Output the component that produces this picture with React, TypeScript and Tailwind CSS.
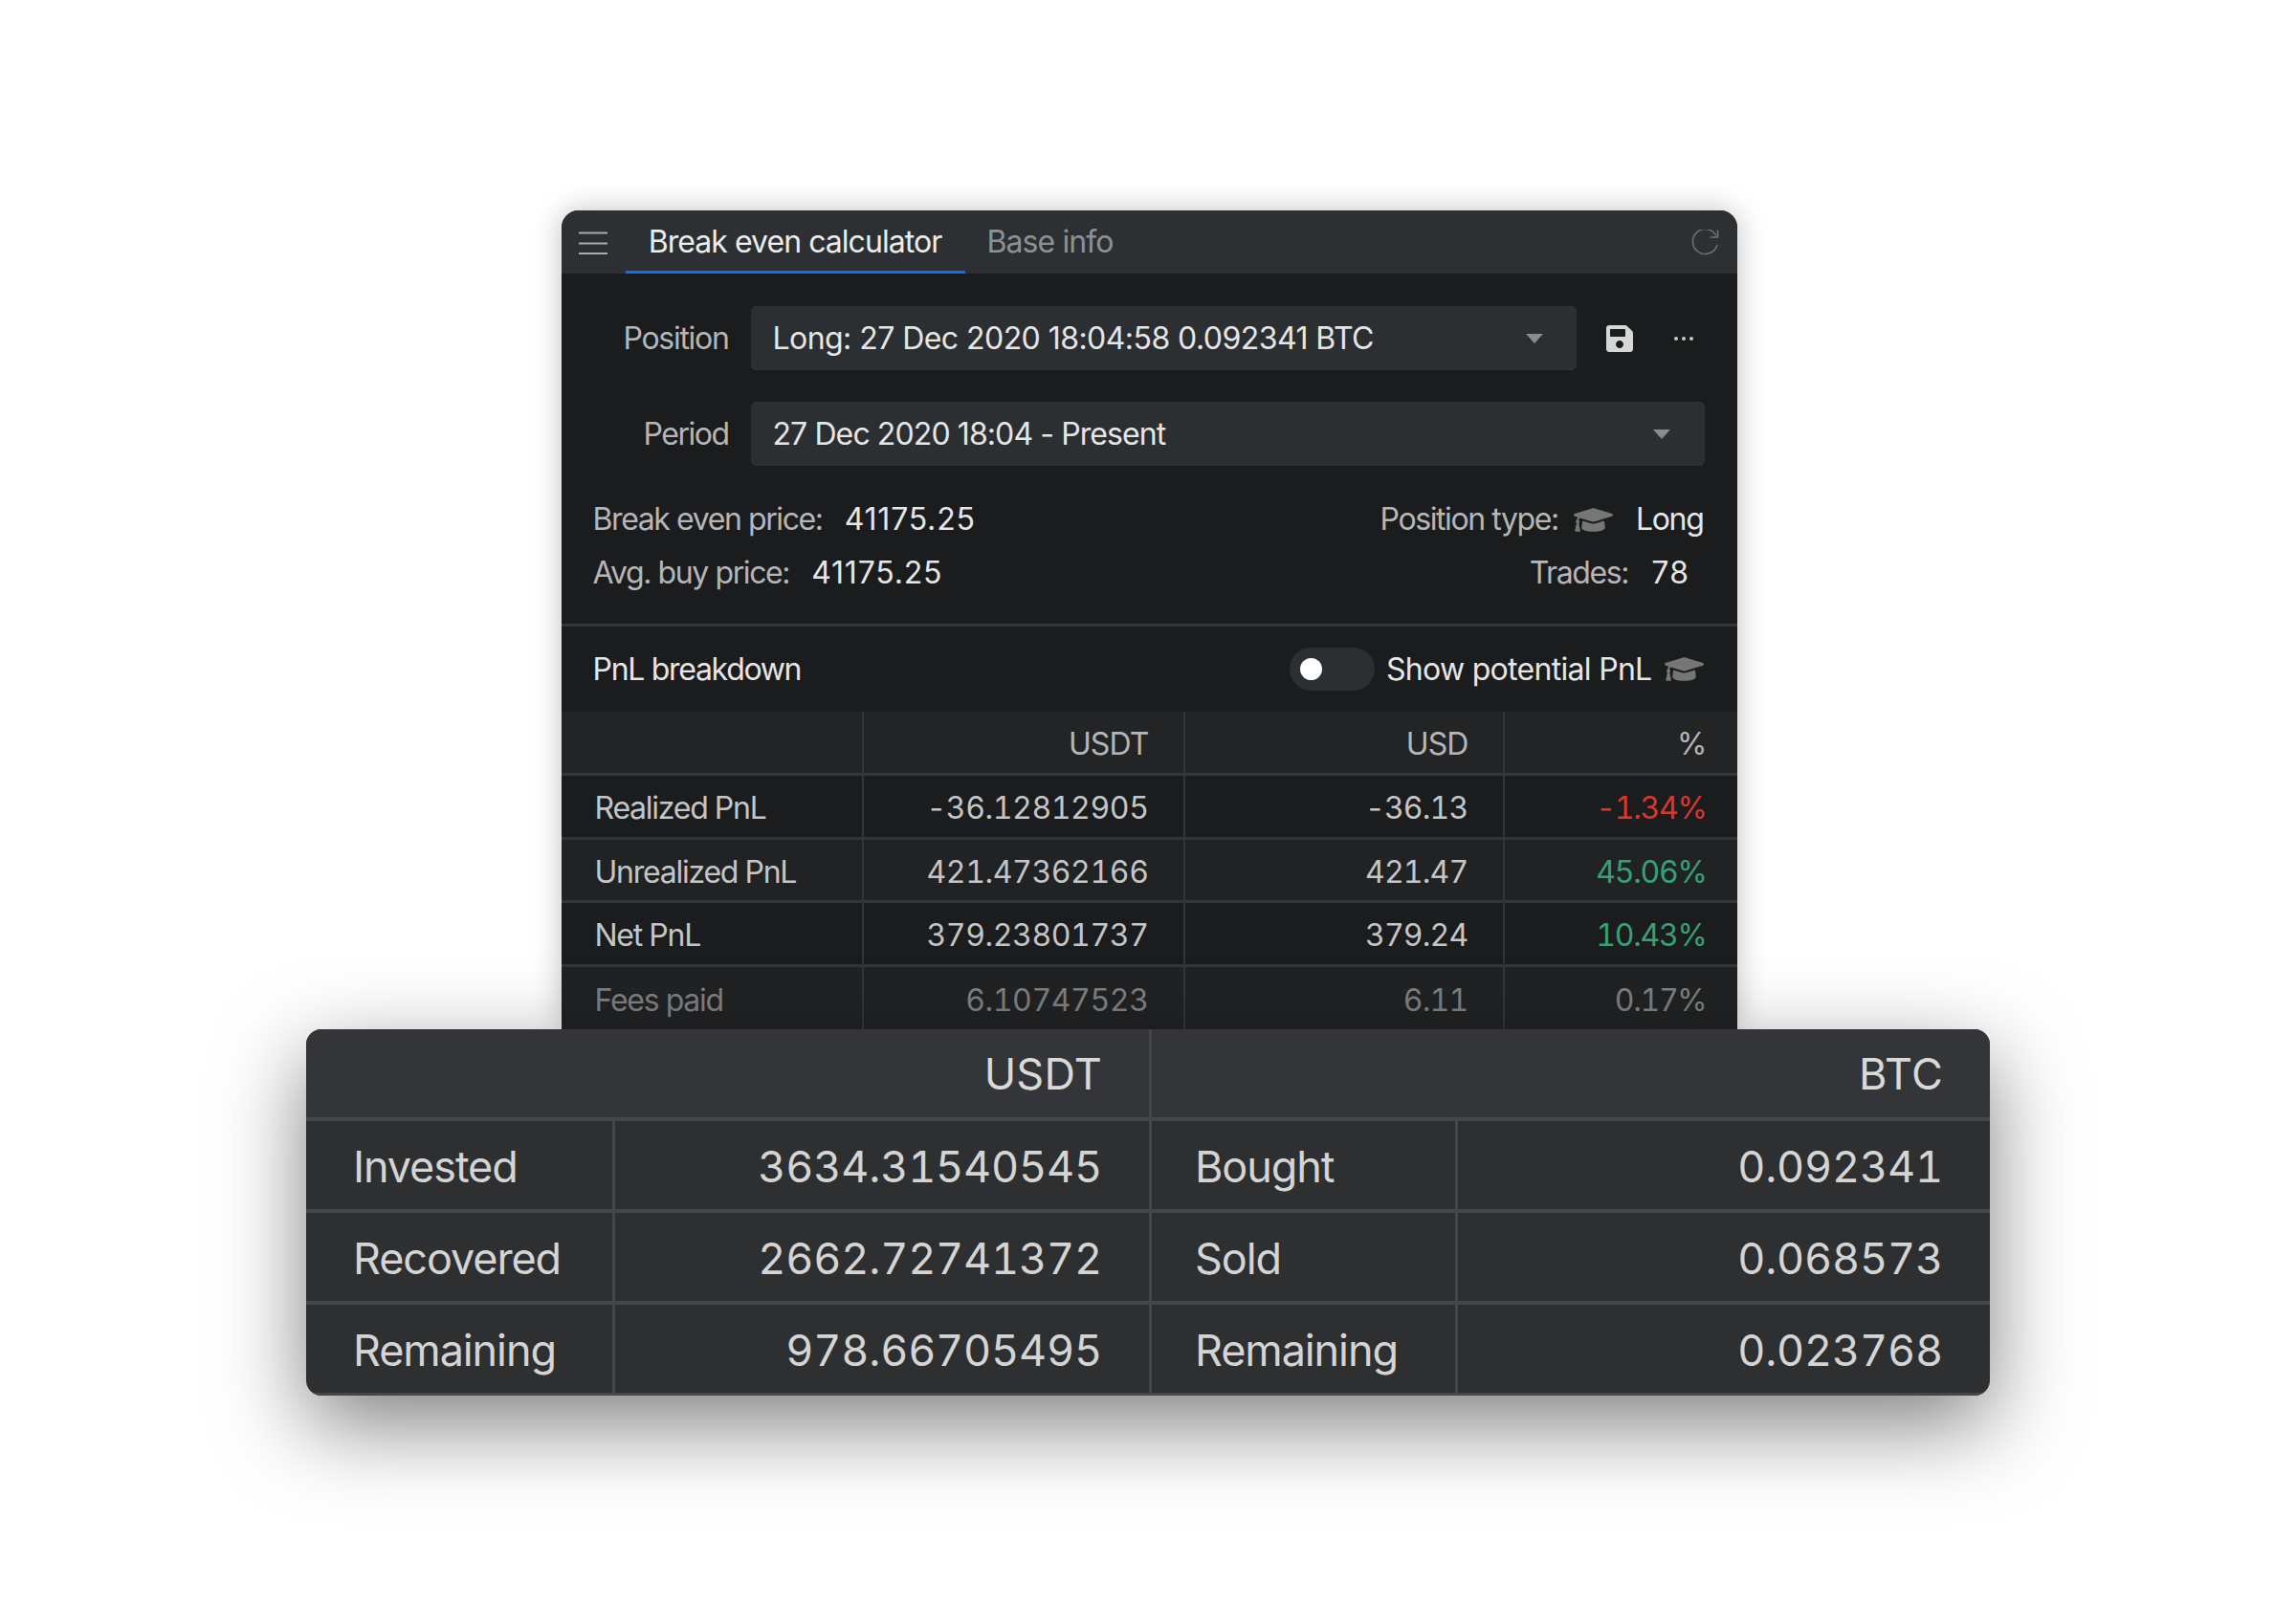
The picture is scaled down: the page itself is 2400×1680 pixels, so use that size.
import { FaSave, FaGraduationCap } from "react-icons/fa";

const font = { fontFamily: "Inter, sans-serif" };

function Caret() {
  return (
    <svg width="18" height="10" viewBox="0 0 18 10" className="shrink-0">
      <path d="M0 0H18L9 10Z" fill="#8a8b8c" />
    </svg>
  );
}

const rows = [
  { label: "Realized PnL", a: "-36.12812905", b: "-36.13", c: "-1.34%", color: "text-[#d9372e]", bg: "bg-[#1b1c1e]", h: "h-[67px]" },
  { label: "Unrealized PnL", a: "421.47362166", b: "421.47", c: "45.06%", color: "text-[#34a274]", bg: "bg-[#212224]", h: "h-[66px]" },
  { label: "Net PnL", a: "379.23801737", b: "379.24", c: "10.43%", color: "text-[#34a274]", bg: "bg-[#1b1c1e]", h: "h-[67px]" },
];

const summary = [
  ["Invested", "3634.31540545", "Bought", "0.092341"],
  ["Recovered", "2662.72741372", "Sold", "0.068573"],
  ["Remaining", "978.66705495", "Remaining", "0.023768"],
];

export default function App() {
  return (
    <div className="w-[2400px] h-[1680px] bg-white flex flex-col items-center pt-[220px] overflow-hidden" style={font}>
      <div className="w-[1229px] h-[856px] ml-[2px] flex flex-col bg-[#1b1c1e] rounded-t-[18px] overflow-hidden shadow-[0_0_30px_rgba(0,0,0,0.25)] text-[32px] tracking-[-1.3px] leading-none">
        <div className="h-[66px] shrink-0 bg-[#2d3033] flex items-stretch pl-[18px] pr-[18px]">
          <svg width="30" height="24" viewBox="0 0 30 24" className="self-center mt-[2px]">
            <path d="M0 1.5H30M0 12.5H30M0 23H30" stroke="#a9abac" strokeWidth="2" />
          </svg>
          <div className="ml-[19px] w-[355px] border-b-[3px] border-[#0f6fe8] flex items-center justify-center text-[#ececec] pt-[3px] tracking-[-0.95px]">Break even calculator</div>
          <div className="ml-[23px] flex items-center text-[#8e9091] tracking-[-0.9px]">Base info</div>
          <svg width="30" height="28" viewBox="0 0 30 28" fill="none" className="ml-auto self-center mt-[1px] mr-[1px]">
            <path d="M27 6.5A13 13 0 1 0 28 16" stroke="#6e7174" strokeWidth="1.6" />
            <path d="M28.5 0.5V8H20.5" stroke="#6e7174" strokeWidth="1.6" />
          </svg>
        </div>

        <div className="flex items-center mt-[34px] h-[67px]">
          <div className="w-[175px] text-right text-[#b5b6b7] pr-0">Position</div>
          <div className="ml-[23px] w-[863px] h-[67px] rounded-[5px] bg-[#2c2f32] border border-[#2f3235] flex items-center justify-between pl-[22px] pr-[34px] text-[#e6e6e6]">
            <span className="tracking-[-0.55px]">Long: 27 Dec 2020 18:04:58 0.092341 BTC</span>
            <Caret />
          </div>
          <FaSave className="ml-[29px] text-[#d6d7d7]" size={32} />
          <div className="ml-[41px] flex gap-[4px]">
            <span className="w-[4px] h-[4px] rounded-full bg-[#c9caca]" />
            <span className="w-[4px] h-[4px] rounded-full bg-[#c9caca]" />
            <span className="w-[4px] h-[4px] rounded-full bg-[#c9caca]" />
          </div>
        </div>

        <div className="flex items-center mt-[33px] h-[67px]">
          <div className="w-[175px] text-right text-[#b5b6b7] tracking-[-1.5px]">Period</div>
          <div className="ml-[23px] w-[997px] h-[67px] rounded-[5px] bg-[#2c2f32] border border-[#2f3235] flex items-center justify-between pl-[22px] pr-[35px] text-[#e6e6e6]">
            <span className="tracking-[-0.9px]">27 Dec 2020 18:04 - Present</span>
            <Caret />
          </div>
        </div>

        <div className="flex justify-between pl-[33px] pr-[35px] mt-[38px] h-[36px] items-center">
          <div className="flex items-center">
            <span className="text-[#b5b6b7] tracking-[-1.4px]">Break even price:</span>
            <span className="ml-[23px] text-[#e6e6e6] tracking-[0.8px]">41175.25</span>
          </div>
          <div className="flex items-center">
            <span className="text-[#b5b6b7] tracking-[-1.4px]">Position type:</span>
            <FaGraduationCap className="ml-[16px] text-[#757676]" size={41} />
            <span className="ml-[24px] text-[#e6e6e6]">Long</span>
          </div>
        </div>
        <div className="flex justify-between pl-[33px] pr-[51px] mt-[20px] h-[36px] items-center">
          <div className="flex items-center">
            <span className="text-[#b5b6b7] tracking-[-1.4px]">Avg. buy price:</span>
            <span className="ml-[23px] text-[#e6e6e6] tracking-[0.8px]">41175.25</span>
          </div>
          <div className="flex items-center">
            <span className="text-[#b5b6b7] tracking-[-1.4px]">Trades:</span>
            <span className="ml-[23px] text-[#e6e6e6] tabular-nums tracking-[-1.05px]">78</span>
          </div>
        </div>

        <div className="mt-[35px] h-[3px] shrink-0 bg-[#333537]" />

        <div className="h-[89px] shrink-0 flex items-center justify-between pl-[33px] pr-[35px]">
          <span className="text-[#e6e6e6] pt-[1px]">PnL breakdown</span>
          <div className="flex items-center">
            <div className="w-[89px] h-[45px] rounded-full bg-[#2c2f32] flex items-center pl-[11px]">
              <div className="w-[23px] h-[23px] rounded-full bg-white" />
            </div>
            <span className="ml-[12px] text-[#e6e6e6] tracking-[-0.7px] pt-[1px]">Show potential PnL</span>
            <FaGraduationCap className="ml-[13px] text-[#757676]" size={41} />
          </div>
        </div>

        <div className="grid grid-cols-[314px_336px_334px_245px] h-[67px] shrink-0 bg-[#232426] border-b-[3px] border-[#333537] text-[#b5b6b7] tracking-[-0.9px]">
          <div />
          <div className="border-l-[2px] border-[#333537] flex items-center justify-end pr-[36px] pt-[3px]">USDT</div>
          <div className="border-l-[2px] border-[#333537] flex items-center justify-end pr-[36px] pt-[3px]">USD</div>
          <div className="border-l-[2px] border-[#333537] flex items-center justify-end pr-[32px] pt-[3px]">%</div>
        </div>

        {rows.map((r) => (
          <div key={r.label} className={`grid grid-cols-[314px_336px_334px_245px] ${r.h} shrink-0 border-b-[3px] border-[#333537] text-[#c4c5c6] tabular-nums ${r.bg}`}>
            <div className="flex items-center pl-[35px] tracking-[-1.25px] pt-[4px]">{r.label}</div>
            <div className="border-l-[2px] border-[#333537] flex items-center justify-end pr-[36px] pt-[4px] tracking-[-0.4px]">{r.a}</div>
            <div className="border-l-[2px] border-[#333537] flex items-center justify-end pr-[36px] pt-[4px] tracking-[-0.8px]">{r.b}</div>
            <div className={`border-l-[2px] border-[#333537] flex items-center justify-end pr-[32px] pt-[4px] tracking-[-1.3px] ${r.color}`}>{r.c}</div>
          </div>
        ))}

        <div className="grid grid-cols-[314px_336px_334px_245px] h-[65px] shrink-0 bg-[#212224] text-[#7e7f80] tabular-nums">
          <div className="flex items-center pl-[35px] tracking-[-1.25px] pt-[4px]">Fees paid</div>
          <div className="border-l-[2px] border-[#333537] flex items-center justify-end pr-[36px] pt-[4px] tracking-[-0.4px]">6.10747523</div>
          <div className="border-l-[2px] border-[#333537] flex items-center justify-end pr-[36px] pt-[4px] tracking-[-0.8px]">6.11</div>
          <div className="border-l-[2px] border-[#333537] flex items-center justify-end pr-[32px] pt-[4px] tracking-[-1.3px]">0.17%</div>
        </div>
      </div>

      <div className="relative w-[1760px] h-[383px] shrink-0 flex flex-col rounded-[16px] overflow-hidden bg-[#2e2f31] text-[45px] tracking-[-1.1px] leading-none text-[#d4d4d4] shadow-[0_30px_90px_rgba(0,0,0,0.5)]">
        <div className="grid grid-cols-[881px_879px] h-[96px] shrink-0 bg-[#343538] border-b-[4px] border-[#43474b] text-[#d9d9d9] tracking-[0.2px]">
          <div className="flex items-center justify-end pr-[49px]">USDT</div>
          <div className="border-l-[3px] border-[#43474b] flex items-center justify-end pr-[49px]">BTC</div>
        </div>
        {summary.map((s) => (
          <div key={s[1]} className="grid grid-cols-[320px_561px_320px_559px] h-[96px] shrink-0 border-b-[4px] border-[#43474b]">
            <div className="flex items-center pl-[49px] pt-[2px]">{s[0]}</div>
            <div className="border-l-[3px] border-[#43474b] flex items-center justify-end pr-[49px] pt-[2px] tabular-nums tracking-[-0.2px]">{s[1]}</div>
            <div className="border-l-[3px] border-[#43474b] flex items-center pl-[45px] pt-[2px]">{s[2]}</div>
            <div className="border-l-[3px] border-[#43474b] flex items-center justify-end pr-[49px] pt-[2px] tabular-nums tracking-[-0.2px]">{s[3]}</div>
          </div>
        ))}
      </div>
    </div>
  );
}
